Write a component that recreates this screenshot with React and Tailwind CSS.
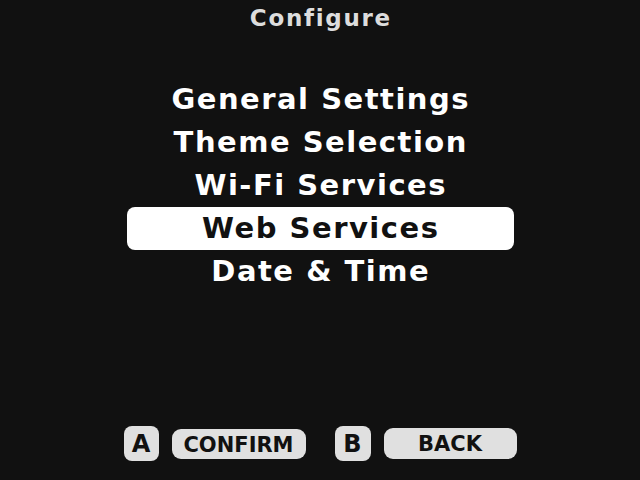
export default function App() {
  const items = ["General Settings", "Theme Selection", "Wi-Fi Services", "Web Services", "Date & Time"];
  const selected = 3;
  return (
    <div className="w-[640px] h-[480px] bg-[#111111] flex flex-col items-center overflow-hidden" style={{ fontFamily: '"DejaVu Sans", "Noto Sans", sans-serif' }}>
      <div className="h-[36px] flex items-center justify-center text-[#dddddd] font-bold text-[23px] leading-none tracking-[1.7px] pl-[1.7px]">Configure</div>
      <div className="mt-[42px] w-[387px] flex flex-col">
        {items.map((t, i) => (
          <div
            key={t}
            className={
              i === selected
                ? "h-[43px] flex items-center justify-center rounded-[8px] bg-white text-[#111111] font-bold text-[29px] leading-none tracking-[1.5px] pl-[1.5px]"
                : "h-[43px] flex items-center justify-center text-white font-bold text-[29px] leading-none tracking-[1.5px] pl-[1.5px]"
            }
          >
            {t}
          </div>
        ))}
      </div>
      <div className="flex-1" />
      <div className="mb-[19px] flex items-center">
        <div className="w-[35px] h-[35px] rounded-[8px] bg-[#e0e0e0] text-[#111111] font-bold text-[24px] leading-none flex items-center justify-center">A</div>
        <div className="ml-[13px] w-[134px] h-[30px] rounded-[9px] bg-[#e0e0e0] text-[#111111] font-bold text-[21px] leading-none flex items-center justify-center pt-[3px]">CONFIRM</div>
        <div className="ml-[29px] w-[36px] h-[35px] rounded-[8px] bg-[#e0e0e0] text-[#111111] font-bold text-[24px] leading-none flex items-center justify-center">B</div>
        <div className="ml-[13px] w-[133px] h-[31px] rounded-[9px] bg-[#e0e0e0] text-[#111111] font-bold text-[21px] leading-none flex items-center justify-center pt-[1px]">BACK</div>
      </div>
    </div>
  );
}
